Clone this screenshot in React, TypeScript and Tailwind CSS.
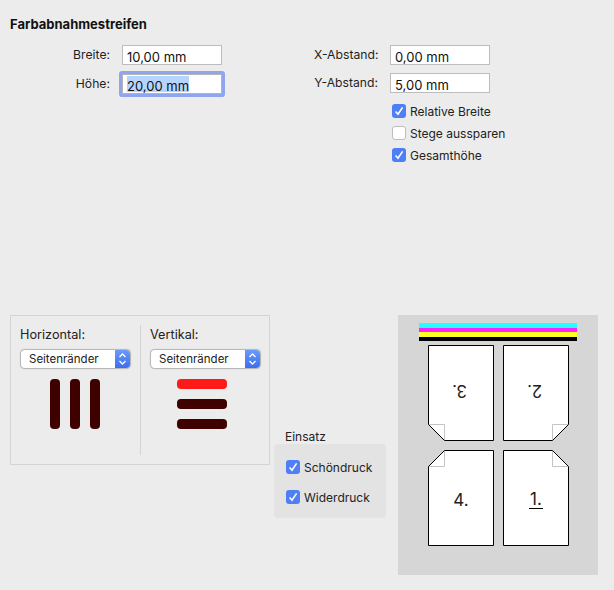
const font = "font-['Inter','Liberation_Sans',sans-serif]"

function Field({ label, value, labelWidth, focused }: { label: string; value: string; labelWidth: string; focused?: boolean }) {
  return (
    <div className="flex items-center">
      <div className={`${labelWidth} text-right text-[12.2px] leading-[20px] whitespace-nowrap text-[#1f1f1f]`}>{label}</div>
      {focused ? (
        <div className="ml-[12px] h-[20px] w-[100px] rounded-[1px] border border-[#b4b4b4] bg-white pl-[4px] text-[13px] leading-[22px] text-[#111] shadow-[0_0_0_3px_#8fa6ee]">
          <span className="mt-[1px] inline-block h-[16px] bg-[#b5d5ff] align-top leading-[20px]">{value}</span>
        </div>
      ) : (
        <div className="ml-[12px] h-[20px] w-[100px] border border-[#bdbdbd] bg-white pl-[4px] text-[13px] leading-[22px] text-[#111]">
          {value}
        </div>
      )}
    </div>
  )
}

function Check({ label, checked }: { label: string; checked: boolean }) {
  return (
    <div className="flex h-[14px] items-center gap-[4px] text-[12px] text-[#222]">
      {checked ? (
        <div className="flex h-[14px] w-[14px] items-center justify-center rounded-[3px] bg-[#4f7ff5]">
          <svg width="10" height="10" viewBox="0 0 10 10" fill="none">
            <path d="M1.6 5.4 L4 8.2 L8.6 1.4" stroke="white" strokeWidth="1.6" />
          </svg>
        </div>
      ) : (
        <div className="h-[14px] w-[14px] rounded-[3px] border border-[#bdbdbd] bg-white" />
      )}
      <span className="pt-[2px]">{label}</span>
    </div>
  )
}

function Select() {
  return (
    <div className="flex h-[18px] w-[109px] rounded-[4px] bg-white shadow-[0_0_1px_0.5px_#b4b4b4]">
      <div className="flex-1 pl-[8px] text-[11.5px] leading-[18px] text-[#222]">Seitenränder</div>
      <div className="flex w-[15px] items-center justify-center rounded-r-[4px] bg-gradient-to-b from-[#6a9bf7] to-[#3d6cf0]">
        <svg width="9" height="14" viewBox="0 0 9 14" fill="none">
          <path d="M1.5 5 L4.5 2 L7.5 5 M1.5 9 L4.5 12 L7.5 9" stroke="white" strokeWidth="1.3" />
        </svg>
      </div>
    </div>
  )
}

function Page({ num, corner, rotated, underline }: { num: string; corner: 'tl' | 'tr' | 'bl' | 'br'; rotated?: boolean; underline?: boolean }) {
  const outlines = {
    tl: 'M16.5 .5 H65.5 V95.5 H.5 V16.5 Z',
    tr: 'M.5 .5 H49.5 L65.5 16.5 V95.5 H.5 Z',
    bl: 'M.5 .5 H65.5 V95.5 H16.5 L.5 79.5 Z',
    br: 'M.5 .5 H65.5 V79.5 L49.5 95.5 H.5 Z',
  }
  const folds = {
    tl: 'M.5 16.5 H16.5 V.5',
    tr: 'M49.5 .5 V16.5 H65.5',
    bl: 'M.5 79.5 H16.5 V95.5',
    br: 'M65.5 79.5 H49.5 V95.5',
  }
  let numClass = 'mt-[3px] leading-[20px]'
  if (rotated) numClass = 'mr-[3px] mb-[5px] rotate-180 leading-[20px]'
  if (underline) numClass = 'mt-[4px] border-b border-black px-[1px] leading-[17px]'
  return (
    <div className="relative flex h-[96px] w-[66px] items-center justify-center">
      <svg className="absolute inset-0" width="66" height="96" viewBox="0 0 66 96" fill="none">
        <path d={outlines[corner]} fill="white" />
        <path d={folds[corner]} stroke="#c4c4c4" />
        <path d={outlines[corner]} stroke="black" />
      </svg>
      <span className={`relative text-[17px] text-[#222] ${numClass}`}>{num}</span>
    </div>
  )
}

export default function App() {
  return (
    <div className={`${font} h-[590px] w-[614px] overflow-hidden bg-[#ececec] pt-[16px]`}>
      <div className="h-[299px] pl-[10px]">
        <h2 className="text-[13px] leading-[16px] font-bold text-[#111]">Farbabnahmestreifen</h2>
        <div className="mt-[13px] flex">
          <div className="flex w-[304px] flex-col gap-[9px]">
            <Field label="Breite:" value="10,00 mm" labelWidth="w-[100px]" />
            <Field label="Höhe:" value="20,00 mm" labelWidth="w-[100px]" focused />
          </div>
          <div className="flex flex-col gap-[8px]">
            <Field label="X-Abstand:" value="0,00 mm" labelWidth="w-[64px]" />
            <Field label="Y-Abstand:" value="5,00 mm" labelWidth="w-[64px]" />
            <div className="mt-[3px] ml-[78px] flex flex-col gap-[8px]">
              <Check label="Relative Breite" checked />
              <Check label="Stege aussparen" checked={false} />
              <Check label="Gesamthöhe" checked />
            </div>
          </div>
        </div>
      </div>

      <div className="flex items-start pl-[10px]">
        <div className="flex h-[150px] w-[260px] border border-[#d3d3d3] py-[9px]">
          <div className="w-[130px] border-r border-[#d3d3d3] pl-[10px]">
            <div className="-ml-[1px] text-[12.7px] leading-[20px] text-[#222]">Horizontal:</div>
            <div className="mt-[5px]"><Select /></div>
            <div className="mt-[11px] ml-[29px] flex gap-[10px]">
              <div className="h-[50px] w-[10px] rounded-[4px] bg-[#3f0000]" />
              <div className="h-[50px] w-[10px] rounded-[4px] bg-[#3f0000]" />
              <div className="h-[50px] w-[10px] rounded-[4px] bg-[#3f0000]" />
            </div>
          </div>
          <div className="pl-[10px]">
            <div className="-ml-[1px] text-[12.7px] leading-[20px] text-[#222]">Vertikal:</div>
            <div className="mt-[5px]"><Select /></div>
            <div className="mt-[11px] ml-[26px] flex flex-col gap-[10px]">
              <div className="h-[10px] w-[50px] rounded-[4px] bg-[#ff1a1a]" />
              <div className="h-[10px] w-[50px] rounded-[4px] bg-[#3f0000]" />
              <div className="h-[10px] w-[50px] rounded-[4px] bg-[#3f0000]" />
            </div>
          </div>
        </div>

        <div className="mt-[114px] ml-[4px] w-[112px]">
          <div className="pl-[11px] text-[12px] leading-[15px] text-[#222]">Einsatz</div>
          <div className="flex h-[74px] flex-col gap-[16px] rounded-[4px] bg-[#e3e3e3] pt-[16px] pl-[12px]">
            <Check label="Schöndruck" checked />
            <Check label="Widerdruck" checked />
          </div>
        </div>

        <div className="ml-[12px] h-[260px] w-[200px] bg-[#d6d6d6] pt-[8px]">
          <div className="mx-auto h-[18px] w-[158px]">
            <div className="h-[4.5px] bg-[#22ffff]" />
            <div className="h-[4.5px] bg-[#ff22ff]" />
            <div className="h-[4.5px] bg-[#ffff22]" />
            <div className="h-[4.5px] bg-black" />
          </div>
          <div className="mt-[4px] ml-[30px] grid w-[141px] grid-cols-[66px_66px] gap-x-[9px] gap-y-[9px]">
            <Page num="3." corner="bl" rotated />
            <Page num="2." corner="br" rotated />
            <Page num="4." corner="tl" />
            <Page num="1." corner="tr" underline />
          </div>
        </div>
      </div>
    </div>
  )
}
